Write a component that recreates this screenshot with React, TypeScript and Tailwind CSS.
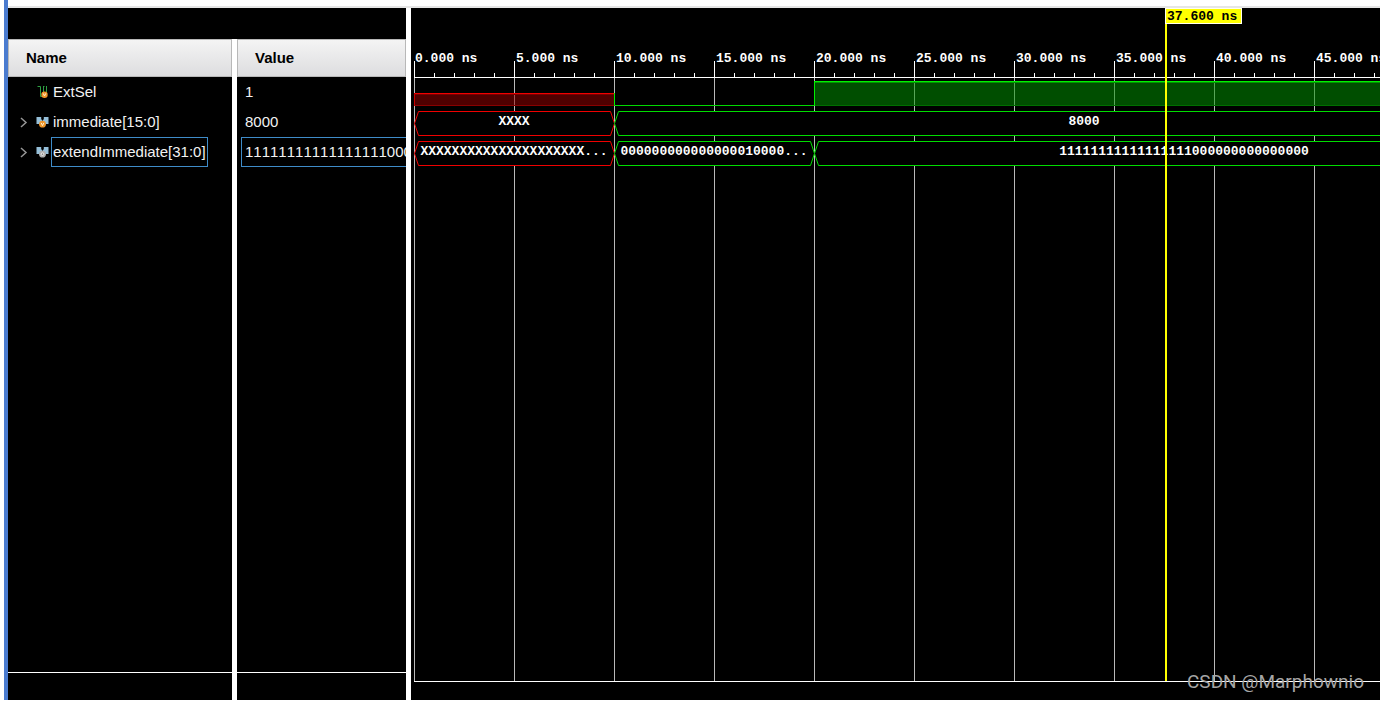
import React from "react";

const NS = 20;
const ORIGIN = 3;
const END_NS = 57;
const MAJOR_COUNT = 12;

type SignalKind = "wire" | "bus-in" | "bus-out";

interface Signal {
  name: string;
  value: string;
  kind: SignalKind;
  selected?: boolean;
}

interface Segment {
  text: string;
  start: number;
  end: number;
  unknown?: boolean;
}

const signals: Signal[] = [
  { name: "ExtSel", value: "1", kind: "wire" },
  { name: "immediate[15:0]", value: "8000", kind: "bus-in" },
  {
    name: "extendImmediate[31:0]",
    value: "11111111111111111000000000000000",
    kind: "bus-out",
    selected: true,
  },
];

const buses: Segment[][] = [
  [
    { text: "XXXX", start: 0, end: 10, unknown: true },
    { text: "8000", start: 10, end: END_NS },
  ],
  [
    { text: "XXXXXXXXXXXXXXXXXXXXX...", start: 0, end: 10, unknown: true },
    { text: "000000000000000010000...", start: 10, end: 20 },
    { text: "11111111111111111000000000000000", start: 20, end: END_NS },
  ],
];

const toX = (ns: number) => ORIGIN + ns * NS;

function SignalIcon({ kind }: { kind: SignalKind }) {
  if (kind === "wire") {
    return (
      <svg width="14" height="14" viewBox="0 0 14 14" className="shrink-0" aria-hidden="true">
        <path d="M1.500 1.500H4.500V11.500H7.500V1.500M10.500 1V7M7 1.500H8.500" fill="none" stroke="#2ea043" strokeWidth="1" />
        <circle cx="8.500" cy="9.700" r="3.200" fill="#f0962a" />
        <path d="M7.200 8.400L8.500 11L9.800 8.400" fill="none" stroke="#fff0cf" strokeWidth="1" />
      </svg>
    );
  }
  return (
    <svg width="14" height="14" viewBox="0 0 14 14" className="shrink-0" aria-hidden="true">
      <path d="M0.500 2H5.200V4L6.500 6L7.800 4V2H12.500V9H9.500L6.500 7L3.500 9H0.500Z" fill="#95bfd9" />
      <circle cx="6.500" cy="9.200" r="3.400" fill={kind === "bus-out" ? "#b0b0b0" : "#f0962a"} />
      {kind === "bus-out" ? (
        <circle cx="6.500" cy="9.200" r="1.300" fill="#8a8a8a" stroke="#f1f1f1" strokeWidth="0.900" />
      ) : (
        <path d="M5.200 7.900L6.500 10.600L7.800 7.900" fill="none" stroke="#fff0cf" strokeWidth="1" />
      )}
    </svg>
  );
}

function SignalTable() {
  return (
    <table className="w-full table-fixed border-separate border-spacing-0 text-[15px] leading-5 text-[#f2f2f2]">
      <colgroup>
        <col className="w-[224px]" />
        <col />
      </colgroup>
      <thead>
        <tr className="text-left text-black">
          <th className="h-[38px] p-0 font-bold">
            <div className="flex h-[38px] items-center border border-[#b8b8b8] bg-linear-to-b from-[#f4f4f4] to-[#dddddf] pl-[17px]">
              Name
            </div>
          </th>
          <th className="h-[38px] border-l-[5px] border-white p-0 font-bold">
            <div className="flex h-[38px] items-center border border-[#b8b8b8] bg-linear-to-b from-[#f4f4f4] to-[#dddddf] pl-[17px]">
              Value
            </div>
          </th>
        </tr>
      </thead>
      <tbody>
        {signals.map((s) => (
          <tr key={s.name}>
            <td className="p-0">
              <div className="flex h-[30px] items-center pl-[10px]">
                {s.kind === "wire" ? (
                  <span className="w-[18px] shrink-0" />
                ) : (
                  <button type="button" aria-label={`Expand ${s.name}`} className="w-[18px] shrink-0">
                    <svg width="11" height="12" viewBox="0 0 11 12" aria-hidden="true">
                      <path d="M3 2L8 6.500L3 11" fill="none" stroke="#969696" strokeWidth="1.500" />
                    </svg>
                  </button>
                )}
                <SignalIcon kind={s.kind} />
                <span
                  className={
                    s.selected
                      ? "ml-px flex h-[30px] items-center border border-[#3f8cc9] pr-px pl-px whitespace-nowrap"
                      : "ml-px flex h-[30px] items-center border border-transparent pl-px whitespace-nowrap"
                  }
                >
                  {s.name}
                </span>
              </div>
            </td>
            <td className="overflow-hidden border-l-[5px] border-white p-0 pl-1">
              <div
                className={
                  s.selected
                    ? "h-[30px] overflow-hidden border border-r-0 border-[#3f8cc9] pl-[3px] leading-7 [font-kerning:none]"
                    : "h-[30px] overflow-hidden border border-transparent pl-[3px] leading-7 [font-kerning:none]"
                }
              >
                {s.value}
              </div>
            </td>
          </tr>
        ))}
      </tbody>
    </table>
  );
}

function busPath(start: number, end: number, top: number) {
  const a = toX(start) + 0.5;
  const b = toX(end) + 0.5;
  const t = top + 0.5;
  return `M${a} ${t + 12}L${a + 4} ${t}H${b - 4}L${b} ${t + 12}L${b - 4} ${t + 24}H${a + 4}Z`;
}

function Waveforms() {
  const majors = Array.from({ length: MAJOR_COUNT }, (_, i) => toX(i * 5));
  const minors = Array.from({ length: END_NS + 1 }, (_, i) => toX(i));
  return (
    <svg className="absolute inset-0 h-full w-full" aria-hidden="true">
      {majors.map((x) => (
        <rect key={x} x={x} y="70" width="1" height="603" fill="#b9b9b9" />
      ))}
      {minors.map((x) => (
        <rect key={x} x={x} y="65" width="1" height="4" fill="#fff" />
      ))}
      {majors.map((x) => (
        <rect key={x} x={x} y="53" width="1" height="17" fill="#fff" />
      ))}
      <rect x={ORIGIN} y="69" width="4000" height="1" fill="#fff" />
      <rect x={ORIGIN} y="673" width="4000" height="1" fill="#fff" />

      <g shapeRendering="crispEdges">
        <rect x={toX(0)} y="85" width="200" height="13" fill="#960000" fillOpacity="0.520" />
        <rect x={toX(0)} y="85" width="200" height="1" fill="#f00000" />
        <rect x={toX(0)} y="86" width="200" height="1" fill="#7a0000" />
        <rect x={toX(0)} y="97" width="200" height="1" fill="#8a0000" />
        <rect x={toX(0)} y="85" width="1" height="13" fill="#c80000" />
        <rect x={toX(10)} y="85" width="1" height="13" fill="#00f000" />
        <rect x={toX(10)} y="97" width="200" height="1" fill="#00d800" />
        <rect x={toX(20)} y="73" width={(END_NS - 20) * NS} height="25" fill="#009600" fillOpacity="0.520" />
        <rect x={toX(20)} y="73" width={(END_NS - 20) * NS} height="1" fill="#00f000" />
        <rect x={toX(20)} y="74" width={(END_NS - 20) * NS} height="1" fill="#009600" />
        <rect x={toX(20)} y="97" width={(END_NS - 20) * NS} height="1" fill="#007000" />
        <rect x={toX(20)} y="73" width="1" height="25" fill="#00f000" />
      </g>

      {buses.map((bus, row) =>
        bus.map((seg) => (
          <path
            key={`${row}-${seg.start}`}
            d={busPath(seg.start, seg.end, 103 + row * 30)}
            fill="#000"
            stroke={seg.unknown ? "#f00000" : "#00dc00"}
            strokeWidth="1"
          />
        )),
      )}
    </svg>
  );
}

function WavePane() {
  return (
    <section
      aria-label="Waveforms"
      className="relative min-w-0 flex-1 overflow-hidden bg-black font-['Liberation_Mono',monospace] text-[13px] font-bold text-white"
    >
      <Waveforms />
      <div className="relative flex pt-[43px] pl-1">
        {Array.from({ length: MAJOR_COUNT }, (_, i) => (
          <span key={i} className={i === 0 ? "w-[101px] shrink-0 leading-4" : "w-[100px] shrink-0 leading-4"}>
            {`${i * 5}.000 ns`}
          </span>
        ))}
      </div>
      <div className="relative pt-[41px] pl-[3px]">
        {buses.map((bus, row) => (
          <div key={row} className="flex h-[30px]">
            {bus.map((seg) => (
              <span
                key={seg.start}
                className="shrink-0 text-center leading-7 whitespace-nowrap"
                style={{ width: (seg.end - seg.start) * NS }}
              >
                {seg.text}
              </span>
            ))}
          </div>
        ))}
      </div>
      <div className="absolute top-0 left-[754px] h-[673px] w-[2px] bg-[#ffff00]" />
      <div className="absolute top-0 left-[754px] h-4 w-[77px] border border-[#fffff0] bg-[#ffff00] pl-px leading-4 whitespace-nowrap text-black">
        37.600 ns
      </div>
    </section>
  );
}

export default function App() {
  return (
    <div className="flex min-h-screen flex-col bg-white pb-[3px] pl-1 font-['Liberation_Sans',Arial,sans-serif]">
      <main className="relative flex flex-1 flex-col border-l-4 border-[#4a7bcf] pt-[6px]">
        <div className="h-[2px] bg-[#e6e6e6]" />
        <div className="flex flex-1 gap-[5px]">
          <section aria-label="Signals" className="flex w-[398px] shrink-0 flex-col overflow-hidden bg-black">
            <div className="h-[31px]" />
            <SignalTable />
            <div className="flex flex-1 gap-[5px] bg-white">
              <div className="flex w-[224px] flex-col justify-end bg-black">
                <div className="h-7 border-t border-white" />
              </div>
              <div className="flex flex-1 flex-col justify-end bg-black">
                <div className="h-7 border-t border-white" />
              </div>
            </div>
          </section>
          <WavePane />
        </div>
        <p className="absolute right-4 bottom-1 font-['Roboto',sans-serif] text-[19px] leading-7 text-[#a6a6a6]">
          CSDN @Marphownio
        </p>
      </main>
    </div>
  );
}
